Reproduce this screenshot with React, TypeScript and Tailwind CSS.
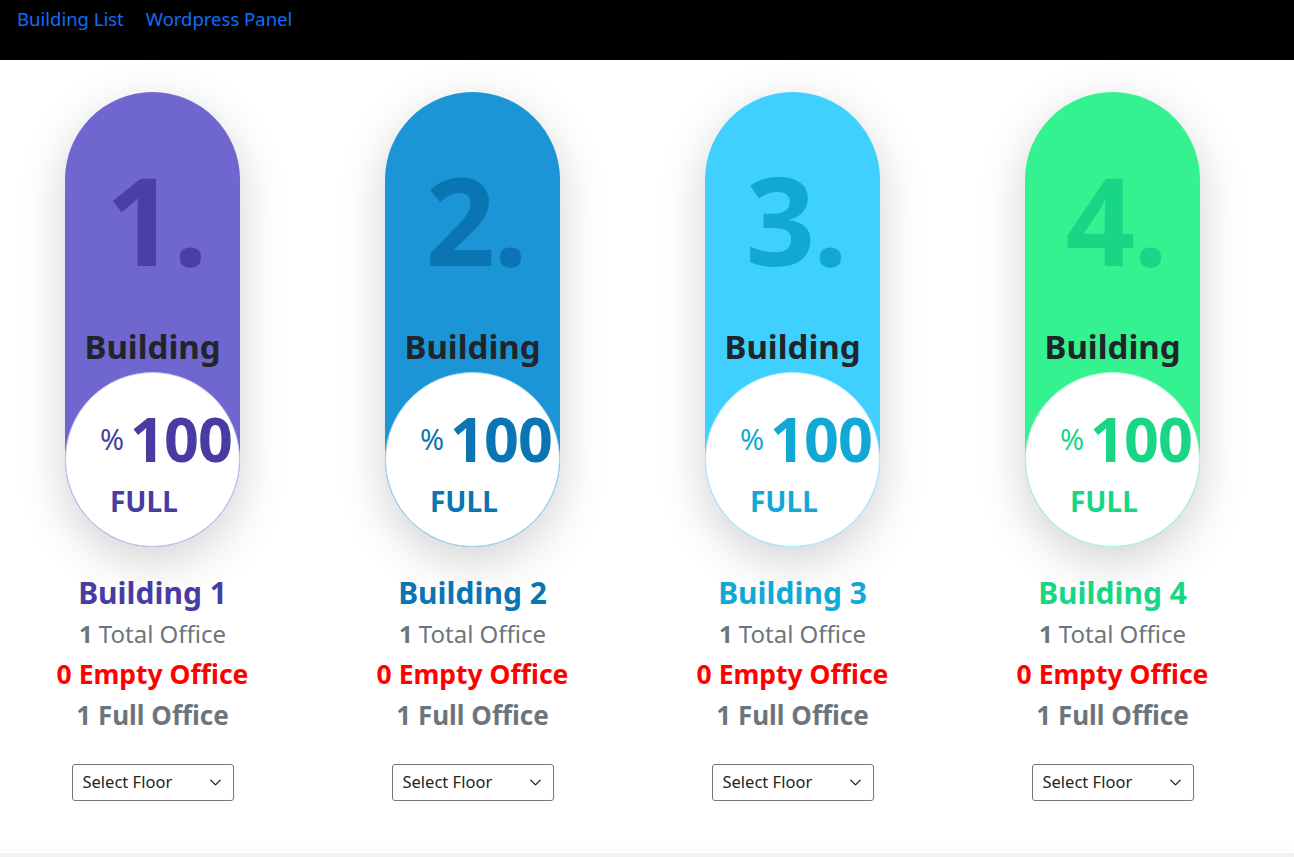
import { ChevronDown } from 'lucide-react';

const buildings = [
  { id: 1, pill: 'bg-[#6f66d0]', num: 'text-[#4a3fa7]', accent: 'text-[#483ca3]', ring: 'border-[#c9c5f0]' },
  { id: 2, pill: 'bg-[#1b95d6]', num: 'text-[#0a75b2]', accent: 'text-[#0a75b2]', ring: 'border-[#a9d5ee]' },
  { id: 3, pill: 'bg-[#40d0ff]', num: 'text-[#12a8d6]', accent: 'text-[#12a8d6]', ring: 'border-[#b3ecff]' },
  { id: 4, pill: 'bg-[#35f290]', num: 'text-[#18d685]', accent: 'text-[#18d685]', ring: 'border-[#b0f8d2]' },
];

export default function App() {
  return (
    <div className="min-h-[857px] flex flex-col bg-white font-['Noto_Sans',sans-serif]">
      {/* Barra superior */}
      <nav className="h-[60px] bg-black flex items-start gap-[22px] pl-[17px] pt-[5px] text-[18.5px] text-[#0d6efd]">
        <a href="#">Building List</a>
        <a href="#">Wordpress Panel</a>
      </nav>

      {/* Cards dos prédios */}
      <main className="flex-1 grid grid-cols-[repeat(4,305px)] gap-x-[15px] pt-[32px]">
        {buildings.map((b) => (
          <div key={b.id} className="flex flex-col items-center">
            <div
              className={`w-[175px] h-[455px] rounded-full ${b.pill} flex flex-col items-center shadow-[0_14px_48px_rgba(0,0,0,0.18)]`}
            >
              <div className={`mt-[66px] h-[160px] pl-[6px] text-[122px] font-bold leading-none tracking-[-2px] ${b.num}`}>
                {b.id}.
              </div>
              <div className="mt-[12px] text-[33px] font-bold leading-none text-[#212529]">Building</div>
              <div className={`mt-auto w-[175px] h-[175px] rounded-full bg-white border ${b.ring} flex flex-col items-start`}>
                <div className={`flex items-center pl-[34px] mt-[35px] ${b.accent}`}>
                  <span className="text-[29px] leading-none mr-[6px]">%</span>
                  <span className="text-[61px] font-bold leading-none tracking-[-1px]">100</span>
                </div>
                <div className={`pl-[44px] mt-[18px] text-[28px] font-bold leading-none ${b.accent}`}>FULL</div>
              </div>
            </div>

            <div className="mt-[25px] flex flex-col items-center leading-[41px]">
              <div className={`text-[30px] font-bold ${b.accent}`}>Building {b.id}</div>
              <div className="text-[24px] text-[#6c757d]">
                <b>1</b> Total Office
              </div>
              <div className="text-[26.5px] font-bold text-[#ff0000]">0 Empty Office</div>
              <div className="text-[26px] font-bold text-[#6c757d]">1 Full Office</div>
            </div>

            <div className="mt-[28px] w-[162px] h-[37px] border border-[#767676] rounded-[3px] flex items-center justify-between pl-[10px] pr-[8px] text-[16.5px] text-[#212529]">
              <span>Select Floor</span>
              <ChevronDown size={19} strokeWidth={1.75} />
            </div>
          </div>
        ))}
      </main>

      {/* Rodapé */}
      <footer className="h-[4px] bg-[#f2f2f2] shadow-[0_-6px_10px_rgba(0,0,0,0.04)]" />
    </div>
  );
}
